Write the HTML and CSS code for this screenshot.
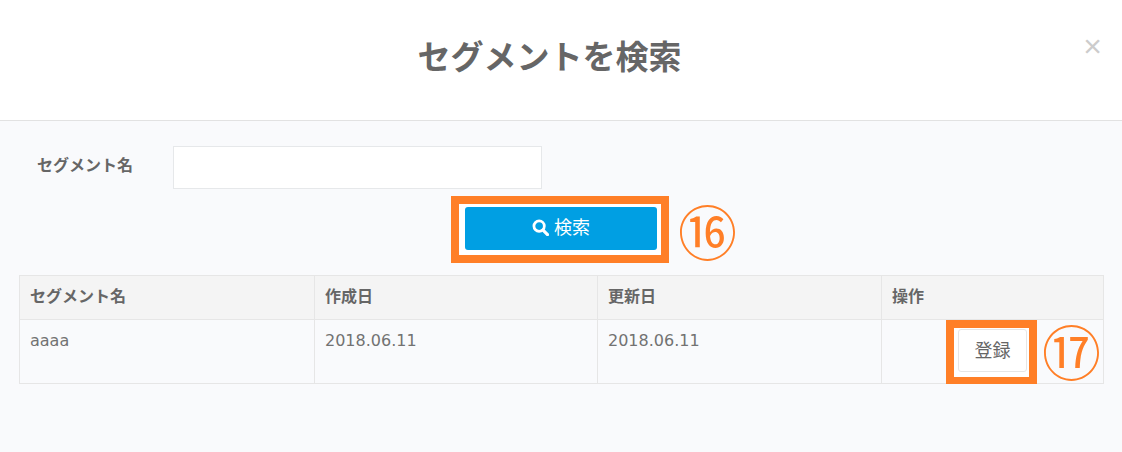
FILE: index.html
```html
<!DOCTYPE html>
<html lang="ja">
<head>
  <meta charset="UTF-8" />
  <meta name="viewport" content="width=device-width, initial-scale=1.0"/>
  <title>セグメントを検索</title>
  <link rel="stylesheet" href="styles.css">
</head>
<body>

  <div class="modal">
    <div class="modal-header">
      <h1>セグメントを検索</h1>
      <span class="close">×</span>
    </div>

    <div class="modal-body">
      <div class="form-row">
        <label for="segmentName">セグメント名</label>
        <input type="text" id="segmentName">
      </div>

      <div class="search-row">
        <div class="mark mark-search">
          <button class="btn-search">
            <svg class="icon-search" viewBox="0 0 16 16" width="17" height="17">
              <circle cx="6.7" cy="6.7" r="4.9" fill="none" stroke="#fff" stroke-width="2.6"/>
              <path d="M10.4 10.4L14.6 14.6" fill="none" stroke="#fff" stroke-width="3" stroke-linecap="round"/>
            </svg>
            <span class="btn-text">検索</span>
          </button>
          <span class="number number-search">⑯</span>
        </div>
      </div>

      <table class="result">
        <thead>
          <tr>
            <th class="col-name">セグメント名</th>
            <th class="col-created">作成日</th>
            <th class="col-updated">更新日</th>
            <th>操作</th>
          </tr>
        </thead>
        <tbody>
          <tr>
            <td>aaaa</td>
            <td>2018.06.11</td>
            <td>2018.06.11</td>
            <td class="cell-action">
              <div class="mark mark-register">
                <button class="btn-register">登録</button>
                <span class="number number-register">⑰</span>
              </div>
            </td>
          </tr>
        </tbody>
      </table>
    </div>
  </div>

</body>
</html>
```

FILE: styles.css
```css
* {
  box-sizing: border-box;
}

body {
  font-family: 'DejaVu Sans', 'Noto Sans CJK JP', sans-serif;
  margin: 0;
  background-color: #f9fafc;
  color: #666;
}

.modal-header {
  position: relative;
  height: 121px;
  background-color: #fff;
  border-bottom: 1px solid #e2e2e2;
  display: flex;
  align-items: center;
  justify-content: center;
}

h1 {
  margin: 0;
  font-size: 33px;
  font-weight: bold;
  color: #666;
  line-height: 1;
  padding: 0 23px 5px 0;
}

.close {
  position: absolute;
  top: 27px;
  right: 20px;
  font-family: 'Liberation Sans', sans-serif;
  font-size: 32px;
  line-height: 38px;
  color: #ccc;
}

.modal-body {
  padding: 25px 18px 0 19px;
}

.form-row {
  display: flex;
  align-items: center;
  height: 43px;
}

label {
  width: 154px;
  padding-left: 18px;
  padding-bottom: 7px;
  font-size: 16px;
  font-weight: bold;
}

input {
  width: 369px;
  height: 43px;
  background-color: #fff;
  border: 1px solid #e6e8ea;
}

.search-row {
  display: flex;
  padding: 7px 0 12px 432px;
}

.mark {
  position: relative;
  background-color: #fff;
  border: 8px solid #ff7f27;
}

.mark-search {
  width: 218px;
  height: 67px;
  padding: 3px 4px 0 6px;
}

.btn-search {
  width: 192px;
  height: 43px;
  background-color: #009fe3;
  color: #fff;
  font-family: inherit;
  font-size: 18px;
  border: none;
  border-radius: 3px;
  display: flex;
  align-items: center;
  justify-content: center;
  gap: 5px;
  padding: 0 0 2px 0;
}

.btn-text {
  padding-bottom: 3px;
}

.number {
  position: absolute;
  color: #ff7f27;
  font-family: 'Noto Sans CJK JP', sans-serif;
  font-size: 59px;
  line-height: 59px;
}

.number-search {
  left: 219px;
  top: -4px;
}

.result {
  width: 1085px;
  border-collapse: collapse;
  table-layout: fixed;
  font-size: 16px;
}

th, td {
  border: 1px solid #e6e6e6;
  text-align: left;
  padding: 0 10px;
}

th {
  height: 44px;
  background-color: #f4f4f4;
  font-weight: bold;
  padding-bottom: 5px;
}

td {
  height: 64px;
  vertical-align: top;
  padding-top: 11px;
  font-size: 16px;
  color: #727272;
}

.col-name {
  width: 295px;
}

.col-created {
  width: 283px;
}

.col-updated {
  width: 284px;
}

.cell-action {
  padding: 0;
  position: relative;
}

.mark-register {
  position: absolute;
  left: 64px;
  top: 0;
  width: 91px;
  height: 65px;
  padding: 1px 0 0 4px;
}

.btn-register {
  width: 69px;
  height: 43px;
  background-color: #fff;
  color: #666;
  font-family: inherit;
  font-size: 18px;
  border: 1px solid #e6e6e6;
  border-radius: 3px;
  padding: 0 0 4px 0;
}

.number-register {
  left: 88px;
  top: -8px;
}
```
